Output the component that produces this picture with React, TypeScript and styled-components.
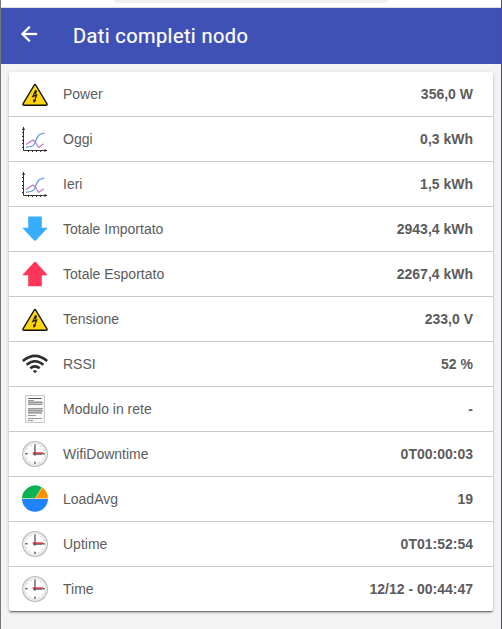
import React from "react";
import styled, { createGlobalStyle } from "styled-components";

const GlobalStyle = createGlobalStyle`
  * { box-sizing: border-box; }
  body { margin: 0; background: #f4f4f4; overflow: hidden; }
`;

const Window = styled.div`
  width: 502px;
  height: 629px;
  overflow: hidden;
  background: #f4f4f4;
  border-left: 1px solid #777;
  border-right: 1px solid #55565a;
  font-family: "Liberation Sans", Arial, sans-serif;
`;

const BrowserBar = styled.div`
  height: 8px;
  background: #fff;
  border-bottom: 1px solid #dcdde0;
`;

const AddressField = styled.div`
  width: 274px;
  height: 3px;
  margin-left: 113px;
  background: #f0f1f3;
  border-radius: 0 0 6px 6px;
`;

const Header = styled.header`
  height: 56px;
  background: #3f51b5;
  color: #fff;
  display: flex;
  align-items: center;
  padding-left: 16px;
`;

const BackButton = styled.button`
  width: 24px;
  height: 24px;
  padding: 0;
  border: 0;
  background: none;
  color: #fff;
  margin: 0 32px 4px 0;
  svg { display: block; }
`;

const Title = styled.h1`
  margin: 0;
  font: 400 20px/24px Roboto, sans-serif;
  letter-spacing: 0.4px;
  -webkit-text-stroke: 0.2px currentColor;
`;

const Card = styled.main`
  margin: 8px 8px 0;
  width: 484px;
  height: 539px;
  background: #fff;
  border-radius: 2px;
  box-shadow: 0 2px 2px 0 rgba(0, 0, 0, 0.14), 0 3px 1px -2px rgba(0, 0, 0, 0.2),
    0 1px 5px 0 rgba(0, 0, 0, 0.12), 0 1px 1px rgba(0, 0, 0, 0.25);
`;

const Row = styled.div`
  height: 45px;
  display: flex;
  align-items: center;
  padding: 0 20px 0 12px;
  border-bottom: 1px solid #c8c8c8;
  font-size: 14px;
  line-height: 20px;
  color: #5c5c5c;
  &:last-child { border-bottom-color: transparent; }
`;

const IconSlot = styled.span`
  width: 28px;
  height: 28px;
  margin-right: 14px;
  svg { display: block; }
`;

const Label = styled.span`
  flex: 1;
`;

const Value = styled.strong`
  font-weight: 700;
`;

const Svg = ({ children }: { children: React.ReactNode }) => (
  <svg width="28" height="28" viewBox="0 0 28 28" fill="none">{children}</svg>
);

const Voltage = () => (
  <Svg>
    <path d="M13.3 5Q14 4.1 14.7 5L26 23.8Q26.5 25.2 25 25.3H3Q1.5 25.2 2 23.8Z" fill="#ffd60c" stroke="#111" strokeWidth="1.4" strokeLinejoin="round" />
    <path d="M14.6 10.4 11.8 16.6 15.6 15 13.4 21.4" stroke="#171300" strokeWidth="1.2" />
    <path d="M14.2 10.2 16.2 10.8 14.9 14.2 14 14.4Z" fill="#171300" />
    <path d="m12 19 .7 4 2.8-2.8-1.6.4Z" fill="#171300" />
  </Svg>
);

const Chart = () => (
  <Svg>
    <path d="M2.5 2.5V25.5H26M1 7.5h1.5M1 11.5h1.5M1 15.5h1.5M1 18.5h1.5M1 22.5h1.5M7.5 25v2M11.5 25v2M15.5 25v2M19.5 25v2" stroke="#333" strokeWidth="1" />
    <path d="m1 5 1.5-3.5L4 5ZM23.5 24l3 1.5-3 1.5Z" fill="#333" />
    <path d="m5 19.5 7-4.5 2 1.7 3.7 5.8 5-3.7" stroke="#b47bcb" strokeWidth="1.2" />
    <path d="M5 22.3c5-.5 7-.8 8.2-3 1.7-3 2.3-7.4 5-9.6L23.6 8" stroke="#6d9bed" strokeWidth="1.3" />
  </Svg>
);

const ImportArrow = () => (
  <Svg><path d="M7.2 1.6H20.8V12.8H26.8L15 25.2Q14 26.3 13 25.2L1.2 12.8H7.2Z" fill="#36adff" /></Svg>
);

const ExportArrow = () => (
  <Svg><path d="M7.2 26.2H20.8V15.3H26.8L15 2.3Q14 1.3 13 2.3L1.2 15.3H7.2Z" fill="#ff3659" /></Svg>
);

const Wifi = () => (
  <Svg>
    <path d="M1.8 11.1Q14 .8 26.2 11.1M5.6 14.7Q14 7.8 22.4 14.7M9.3 18.3Q14 14.5 18.7 18.3" stroke="#2d2d2d" strokeWidth="2.6" />
    <path d="M11.7 21.1Q14 19.5 16.3 21.1L14 23.2Z" fill="#2d2d2d" />
  </Svg>
);

const Document = () => (
  <Svg>
    <path d="M4.5.5h19v27h-19Z" fill="#f8f8f8" stroke="#c8c8c8" />
    <path d="M7.5 3.5H20.5" stroke="#555" />
    <path d="M7 5.5h6M7 7.5h15M7 9.5h14M7 13.5h15M7 15.5h15M7 17.5h14M7 20.5h8M7 23.5h14M7 25.5h5" stroke="#999" />
    <path d="M7 6.5h14M7 8.5h15M7 14.5h14M7 16.5h15M7 18.5h14" stroke="#c3c3c3" />
  </Svg>
);

const Clock = () => (
  <Svg>
    <circle cx="14" cy="14" r="12.3" fill="#fff" stroke="#bababa" strokeWidth="1.3" />
    <circle cx="14" cy="14" r="10.9" stroke="#e6e6e6" strokeWidth="1.8" />
    <circle cx="14" cy="14" r="9.2" stroke="#aaa" strokeWidth=".8" strokeDasharray="1 3.82" />
    <path d="M14 21.8v2M4.5 13.8h2M21.5 13.8h2" stroke="#555" strokeWidth="1.5" />
    <path d="M14 4.5V15.7M12 14.2H21" stroke="#555" strokeWidth="1.3" />
    <path d="M11.6 13H22" stroke="#d91525" strokeWidth="1.2" />
  </Svg>
);

const Pie = () => (
  <Svg>
    <path d="M1 13.8a13 13 0 0 0 26 0Z" fill="#2083fb" />
    <path d="M1 13.5A13 13 0 0 1 20.9 2.5L14.2 13.5Z" fill="#0cb351" />
    <path d="M14.2 13.5 21 2.5A13 13 0 0 1 27 13.5Z" fill="#ff9100" />
    <path d="M1 13.5H27M14.2 13.5 21 2.5" stroke="#f7ddb1" strokeWidth=".6" />
  </Svg>
);

const rows = [
  { icon: Voltage, label: "Power", value: "356,0 W" },
  { icon: Chart, label: "Oggi", value: "0,3 kWh" },
  { icon: Chart, label: "Ieri", value: "1,5 kWh" },
  { icon: ImportArrow, label: "Totale Importato", value: "2943,4 kWh" },
  { icon: ExportArrow, label: "Totale Esportato", value: "2267,4 kWh" },
  { icon: Voltage, label: "Tensione", value: "233,0 V" },
  { icon: Wifi, label: "RSSI", value: "52 %" },
  { icon: Document, label: "Modulo in rete", value: "-" },
  { icon: Clock, label: "WifiDowntime", value: "0T00:00:03" },
  { icon: Pie, label: "LoadAvg", value: "19" },
  { icon: Clock, label: "Uptime", value: "0T01:52:54" },
  { icon: Clock, label: "Time", value: "12/12 - 00:44:47" },
];

export default function App() {
  return (
    <>
      <GlobalStyle />
      <Window>
        <BrowserBar><AddressField /></BrowserBar>
        <Header>
          <BackButton aria-label="Indietro">
            <svg width="24" height="24" viewBox="0 0 24 24">
              <path d="M20 11H7.83l5.59-5.59L12 4l-8 8 8 8 1.41-1.41L7.83 13H20v-2z" fill="currentColor" stroke="currentColor" strokeWidth=".3" />
            </svg>
          </BackButton>
          <Title>Dati completi nodo</Title>
        </Header>
        <Card>
          {rows.map(({ icon: Icon, label, value }) => (
            <Row key={label}>
              <IconSlot><Icon /></IconSlot>
              <Label>{label}</Label>
              <Value>{value}</Value>
            </Row>
          ))}
        </Card>
      </Window>
    </>
  );
}
